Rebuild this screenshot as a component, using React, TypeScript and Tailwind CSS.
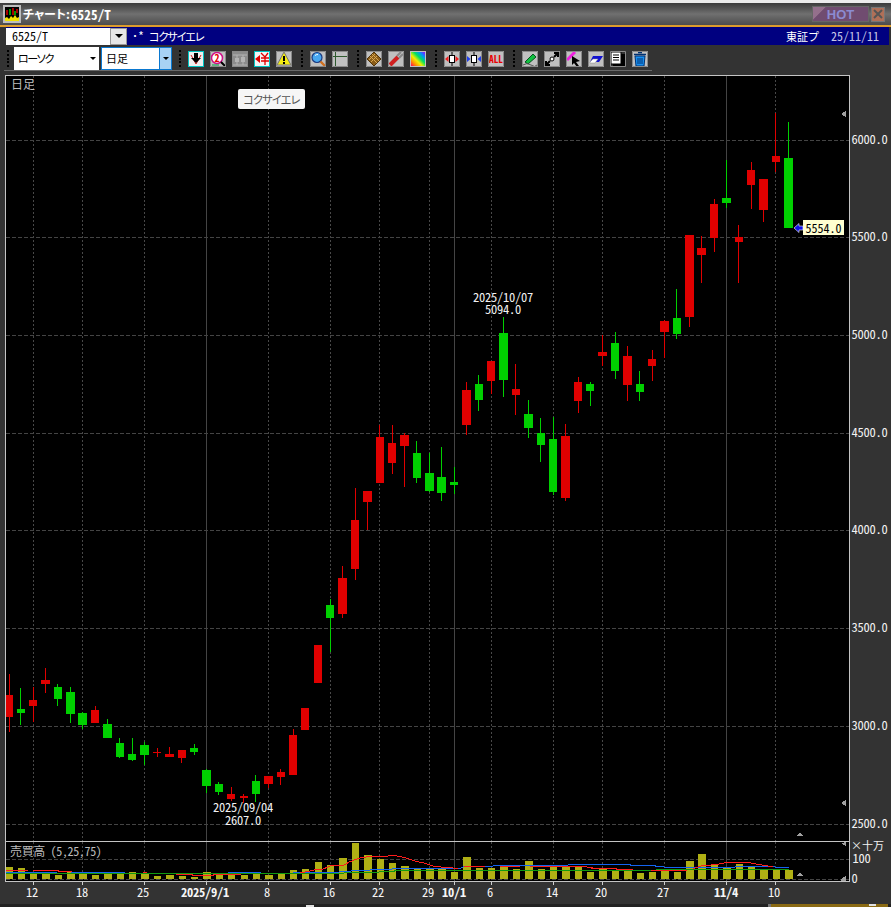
import React from "react";

// [cx, high, bodyTop, bodyBottom, low, color, bodyLeft, bodyWidth]
type C = [number, number, number, number, number, "r" | "g", number, number];
const candles: C[] = [
  [9, 674, 695, 717, 732, "r", 5, 8],
  [20, 688, 709, 713, 725, "g", 17, 8],
  [33, 687, 700, 706, 722, "r", 29, 8],
  [45, 668, 680, 684, 693, "r", 41, 9],
  [57, 684, 687, 699, 706, "g", 54, 8],
  [70, 687, 692, 714, 723, "g", 66, 9],
  [82, 712, 713, 725, 729, "g", 78, 9],
  [95, 706, 710, 723, 723, "r", 91, 8],
  [107, 719, 724, 738, 738, "g", 103, 9],
  [119, 738, 743, 757, 758, "g", 116, 8],
  [132, 738, 754, 760, 761, "g", 128, 8],
  [144, 742, 745, 755, 765, "g", 140, 9],
  [157, 748, 752, 753, 757, "r", 153, 8],
  [169, 747, 754, 757, 757, "r", 165, 9],
  [181, 750, 750, 758, 763, "r", 178, 8],
  [194, 744, 748, 752, 755, "g", 190, 8],
  [206, 769, 770, 786, 793, "g", 202, 9],
  [218, 782, 784, 792, 795, "g", 215, 8],
  [231, 787, 794, 799, 801, "r", 227, 8],
  [243, 794, 796, 798, 803, "r", 240, 8],
  [255, 775, 781, 794, 802, "g", 252, 8],
  [268, 776, 776, 784, 788, "r", 264, 9],
  [280, 769, 772, 777, 785, "r", 277, 8],
  [293, 729, 735, 775, 775, "r", 289, 8],
  [305, 708, 708, 730, 730, "r", 301, 8],
  [318, 645, 645, 683, 683, "r", 314, 8],
  [330, 599, 605, 618, 652, "g", 326, 8],
  [342, 566, 578, 614, 618, "r", 338, 9],
  [355, 488, 520, 569, 580, "r", 351, 8],
  [367, 491, 491, 502, 530, "r", 363, 9],
  [379, 425, 437, 483, 483, "r", 376, 8],
  [392, 425, 443, 463, 474, "r", 388, 8],
  [404, 433, 435, 446, 487, "r", 400, 9],
  [416, 441, 453, 478, 483, "g", 413, 8],
  [429, 453, 473, 491, 492, "g", 425, 9],
  [441, 447, 477, 493, 501, "g", 437, 9],
  [454, 467, 482, 485, 494, "g", 450, 8],
  [466, 382, 390, 425, 435, "r", 462, 9],
  [478, 375, 384, 400, 411, "g", 475, 8],
  [491, 361, 361, 381, 394, "r", 487, 8],
  [503, 317, 333, 380, 397, "g", 499, 9],
  [515, 364, 389, 395, 415, "r", 512, 8],
  [528, 400, 414, 428, 438, "g", 524, 9],
  [540, 418, 433, 445, 462, "g", 537, 8],
  [553, 417, 439, 492, 495, "g", 549, 8],
  [565, 424, 436, 498, 501, "r", 561, 9],
  [578, 377, 382, 401, 413, "r", 574, 8],
  [590, 382, 384, 391, 406, "g", 586, 8],
  [602, 335, 352, 356, 366, "r", 598, 9],
  [615, 332, 343, 371, 379, "g", 611, 8],
  [627, 346, 356, 385, 401, "r", 623, 9],
  [639, 371, 384, 392, 401, "g", 636, 8],
  [652, 350, 359, 366, 381, "r", 648, 8],
  [664, 320, 321, 332, 358, "r", 660, 9],
  [676, 289, 318, 334, 339, "g", 673, 8],
  [689, 235, 235, 317, 327, "r", 685, 9],
  [701, 236, 248, 255, 283, "r", 697, 9],
  [714, 199, 204, 238, 252, "r", 710, 8],
  [726, 160, 198, 203, 208, "g", 722, 9],
  [738, 225, 237, 242, 283, "r", 735, 8],
  [751, 162, 170, 185, 209, "r", 747, 8],
  [763, 179, 179, 210, 222, "r", 759, 9],
  [775, 113, 156, 162, 172, "r", 772, 8],
  [788, 122, 158, 228, 228, "g", 784, 9],
];

const volTops = [
  867, 868, 874, 874, 875, 872, 874, 875, 874, 874, 872, 873, 876, 875, 876, 877, 872, 874, 874, 875, 874, 875, 874, 870,
  869, 862, 865, 858, 843, 855, 859, 863, 866, 869, 869, 869, 872, 857, 868, 868, 867, 869, 861, 869, 867, 867, 867, 872,
  869, 871, 871, 873, 872, 871, 872, 861, 854, 865, 868, 864, 867, 870, 870, 870,
];

const hLines = [140, 237, 335, 433, 530, 628, 726, 824];
const dotted = [33, 82, 144, 268, 330, 379, 429, 491, 553, 602, 664, 775];
const solid = [206, 454, 726];

const z = (off: number, pts: [number, number][]) =>
  pts.map(([x, y]) => `${x / 3 + off},${780 + y / 3}`).join(" ");

const red = [
  z(0, [[17, 271], [84, 271]]),
  z(0, [[99, 271], [174, 271], [174, 274], [215, 274]]),
  z(0, [[429, 277], [440, 277]]),
  z(0, [[528, 283], [578, 283], [578, 286], [640, 286], [640, 283], [723, 283]]),
  z(300, [[0, 278], [21, 275], [42, 270], [70, 267], [90, 258], [130, 256], [150, 245], [175, 235], [210, 229], [260, 229], [275, 226], [300, 229], [320, 235], [345, 243], [375, 250], [400, 258], [430, 262], [475, 265]]),
  z(300, [[492, 259], [555, 259]]),
  z(300, [[600, 260], [660, 258]]),
  z(300, [[690, 259], [850, 259], [870, 263], [900, 266]]),
  z(591, [[0, 265], [75, 265], [75, 268], [125, 268]]),
  z(591, [[180, 270], [230, 272], [290, 270]]),
  z(591, [[305, 266], [330, 258], [380, 253], [390, 250], [420, 247], [470, 247], [500, 253], [545, 260]]),
];
const blue = [
  z(0, [[17, 278], [174, 276], [215, 274], [215, 278], [375, 278]]),
  z(0, [[684, 278], [783, 278]]),
  z(0, [[880, 278], [900, 278]]),
  z(300, [[0, 278], [90, 278], [130, 275], [165, 272], [210, 270], [300, 266], [475, 267], [490, 261], [580, 258], [690, 256], [800, 256], [810, 253], [900, 253]]),
  z(591, [[0, 253], [115, 253], [120, 256], [190, 256], [195, 259], [230, 262], [430, 262], [440, 258], [500, 258], [510, 260], [595, 262]]),
];
const green = [
  z(0, [[17, 281], [900, 280]]),
  z(300, [[0, 280], [90, 280], [220, 277], [300, 272], [535, 272], [540, 271], [900, 271]]),
  z(591, [[0, 271], [595, 268]]),
];

const dates: [number, string, boolean][] = [
  [32, "12", false], [82, "18", false], [143, "25", false], [205, "2025/9/1", true], [267, "8", false],
  [329, "16", false], [378, "22", false], [428, "29", false], [454, "10/1", true], [490, "6", false],
  [552, "14", false], [601, "20", false], [663, "27", false], [726, "11/4", true], [774, "10", false],
];

const prices: [number, string][] = [
  [140, "6000.0"], [237, "5500.0"], [335, "5000.0"], [433, "4500.0"], [530, "4000.0"], [628, "3500.0"], [726, "3000.0"], [824, "2500.0"],
];

const Grip = () => (
  <div className="flex h-[17px] w-[3px] shrink-0 flex-col justify-between">
    {[0, 1, 2, 3, 4].map((i) => (
      <span key={i} className="h-[2px] w-[2px] bg-black" />
    ))}
  </div>
);

const Icon = ({ children, cyan, bg }: { children: React.ReactNode; cyan?: boolean; bg?: string }) => (
  <svg width="16" height="16" viewBox="0 0 16 16" className="shrink-0">
    <rect x="0" y="0" width="16" height="16" fill={bg ?? "#c0c0c0"} />
    {children}
    {cyan ? (
      <rect x="0.5" y="0.5" width="15" height="15" fill="none" stroke="#00c4c4" />
    ) : (
      <path d="M0.5 15.5V.5H15.5M15.5 .5V15.5H.5" fill="none" stroke="#8a8a8a" strokeWidth="1" />
    )}
  </svg>
);

const CandleIcon = ({ colour, inward }: { colour: string; inward?: boolean }) => (
  <>
    <path d="M8 1V15" stroke="#000" />
    <rect x="5.5" y="4.5" width="5" height="7" fill="#fff" stroke="#000" />
    {inward ? (
      <path d="M1 5L4.5 8L1 11ZM15 5L11.5 8L15 11Z" fill={colour} />
    ) : (
      <path d="M4.5 5V11L1 8ZM11.5 5V11L15 8Z" fill={colour} />
    )}
  </>
);

const T = ({ x, y, children, fill = "#f2f2f2", anchor = "start", bold }: {
  x: number; y: number; children: React.ReactNode; fill?: string; anchor?: "start" | "middle" | "end"; bold?: boolean;
}) => (
  <text x={x} y={y - 1.2} fill={fill} textAnchor={anchor} fontSize={12.5} letterSpacing={-0.25} fontWeight={bold ? 700 : 400} dominantBaseline="central">
    {children}
  </text>
);

const Grid = ({ y1, y2, rows }: { y1: number; y2: number; rows: number[] }) => (
  <g shapeRendering="crispEdges">
    {dotted.map((x) => (
      <line key={x} x1={x + 0.5} x2={x + 0.5} y1={y1} y2={y2} stroke="#484848" strokeDasharray="2 2" />
    ))}
    {solid.map((x) => (
      <line key={x} x1={x + 0.5} x2={x + 0.5} y1={y1} y2={y2} stroke="#444" />
    ))}
    {rows.map((y) => (
      <line key={y} x1={6} x2={849} y1={y + 0.5} y2={y + 0.5} stroke="#444" strokeDasharray="4 2" />
    ))}
  </g>
);

export default function App() {
  return (
    <div className='relative flex h-[907px] w-[891px] flex-col overflow-hidden bg-[#333333] [font-family:"Noto_Sans_CJK_JP",sans-serif] [font-feature-settings:"hwid"] text-[12px] leading-none text-white'>
      <div className="h-[3px] shrink-0 bg-[#ececec]" />

      {/* title bar */}
      <div className="flex h-[22px] shrink-0 items-center bg-gradient-to-b from-[#3c3c3c] via-[#707070] to-[#4c4c4c] pl-[3px] pr-[6px]">
        <svg width="18" height="18" viewBox="0 0 18 18" className="shrink-0">
          <rect width="18" height="18" fill="#bdbdbd" />
          <rect x="2" y="2" width="14" height="14" fill="#000" />
          <path d="M2 16V13L4 12L6 14L8 11L10 13L12 10L14 13L16 12V16Z" fill="#f2e200" />
          <path d="M4 5V10M10 3V10M14 4V8" stroke="#e00000" strokeWidth="1.5" />
          <path d="M7 4V10M12 6V10" stroke="#00c800" strokeWidth="1.5" />
        </svg>
        <span className="ml-[2px] text-[12px] font-bold [font-feature-settings:'palt']">チャート:</span>
        <span className="ml-[1px] text-[13px] font-bold tracking-[0.2px]">6525/T</span>
        <div className="ml-auto flex h-[16px] w-[57px] items-center justify-center border border-[#666] bg-[linear-gradient(135deg,#94708c_0%,#94708c_18%,#704c70_19%)] text-[13px] font-bold [font-family:'Liberation_Sans',sans-serif] text-[#8b8bd0]">
          HOT
        </div>
        <div className="ml-[2px] flex h-[15px] w-[14px] items-center justify-center border border-[#777] bg-[#b07058]">
          <svg width="10" height="10" viewBox="0 0 10 10">
            <path d="M1 1L9 9M9 1L1 9" stroke="#555" strokeWidth="2" />
          </svg>
        </div>
      </div>
      <div className="h-[2px] shrink-0 bg-[#dc9c2c]" />

      {/* symbol bar */}
      <div className="ml-[6px] mr-[2px] flex h-[18px] shrink-0 items-center bg-[#000080]">
        <div className="flex h-[17px] w-[104px] items-center bg-white pl-[6px] text-[12px] text-black">6525/T</div>
        <div className="flex h-[17px] w-[17px] items-center justify-center border border-[#999] bg-[#e6e6e6]">
          <span className="h-0 w-0 border-x-[4px] border-t-[4px] border-x-transparent border-t-black" />
        </div>
        <span className="ml-[5px] text-[12px]">･*</span>
        <span className="ml-[5px] text-[11px] tracking-[-1px] [font-feature-settings:'palt']">コクサイエレ</span>
        <span className="ml-auto text-[11px] [font-feature-settings:'normal']">東証プ</span>
        <span className="ml-[12px] mr-[10px] text-[#c8c8e8]">25/11/11</span>
      </div>

      {/* toolbar */}
      <div className="ml-[4px] flex h-[26px] w-[648px] shrink-0 items-center border-b border-[#6a6a6a] pl-[3px] pt-[2px]">
        <Grip />
        <div className="ml-[4px] flex h-[23px] w-[85px] items-center justify-between bg-white pl-[4px] pr-[3px] text-[11px] text-black">
          <span className="tracking-[-1.4px] [font-feature-settings:'palt']">ローソク</span>
          <span className="h-0 w-0 border-x-[3px] border-t-[3px] border-x-transparent border-t-black" />
        </div>
        <div className="ml-[2px] flex h-[23px] w-[71px] items-stretch border border-[#0a78d0] bg-white text-[11px] text-black">
          <span className="flex flex-1 items-center pl-[4px] [font-feature-settings:'normal']">日足</span>
          <span className="flex w-[12px] items-center justify-center border-l border-[#0a78d0] bg-[#a8d2f4]">
            <span className="h-0 w-0 border-x-[3px] border-t-[3px] border-x-transparent border-t-black" />
          </span>
        </div>
        <div className="ml-[7px]"><Grip /></div>
        <div className="ml-[6px] flex gap-[6px]">
          <Icon cyan bg="#f0f0f0">
            <path d="M3 4L8 13L13 4" fill="none" stroke="#d01818" strokeWidth="1" />
            <path d="M6 2H10V7H13L8 12L3 7H6Z" fill="#000" />
          </Icon>
          <Icon>
            <circle cx="7" cy="7" r="5.5" fill="#fff" stroke="#d0108a" strokeWidth="1.5" />
            <text x="7" y="10.5" fontSize="10" fill="#e00000" textAnchor="middle" fontWeight={700}>2</text>
            <path d="M11 11L15 15" stroke="#000" strokeWidth="2" />
            <path d="M2 14H9" stroke="#00a040" />
          </Icon>
          <Icon bg="#8c8c8c">
            <path d="M1 4H15M1 14H15M5 4V14M11 4V14" stroke="#b4b4b4" />
            <rect x="3" y="7" width="4" height="4" fill="#b4b4b4" />
            <rect x="9" y="6" width="4" height="5" fill="#b4b4b4" />
          </Icon>
          <Icon cyan bg="#f4f4f4">
            <path d="M1 8L6 4V12Z" fill="#e00000" />
            <path d="M7 2L11 6L14 2M7 7H15M7 10H15M11 6V14" stroke="#e00000" fill="none" strokeWidth="1.3" />
          </Icon>
          <Icon>
            <path d="M8 1L15 14H1Z" fill="#f4ec10" stroke="#777" />
            <path d="M8 5V10M8 11V13" stroke="#000" strokeWidth="2" />
          </Icon>
        </div>
        <div className="ml-[9px]"><Grip /></div>
        <div className="ml-[6px] flex gap-[6px]">
          <Icon>
            <circle cx="7" cy="6.5" r="5" fill="#48a8f0" stroke="#1a3a80" strokeWidth="1.2" />
            <path d="M5 4.5Q6 3.5 8 3.5" stroke="#fff" fill="none" />
            <path d="M10.5 10.5L15 15" stroke="#d07020" strokeWidth="2.4" />
          </Icon>
          <Icon>
            <path d="M0 5.5H16M3.5 0V16" stroke="#2e5a2e" strokeWidth="1" />
          </Icon>
        </div>
        <div className="ml-[9px]"><Grip /></div>
        <div className="ml-[6px] flex gap-[6px]">
          <Icon>
            <path d="M8 1L15 8L8 15L1 8Z" fill="#8a5c18" stroke="#50340a" />
            <path d="M4 5L11 12M6 3L13 10M5 11L11 5M3 9L9 3" stroke="#d8a850" />
          </Icon>
          <Icon>
            <path d="M2 14L10 6" stroke="#d02020" strokeWidth="4" />
            <path d="M9 5L13 1M11 7L15 3" stroke="#888" strokeWidth="2" />
          </Icon>
          <svg width="16" height="16" viewBox="0 0 16 16" className="shrink-0">
            <defs>
              <linearGradient id="rb" x1="0" y1="1" x2="1" y2="0">
                <stop offset="0" stopColor="#ff0060" />
                <stop offset=".2" stopColor="#ff9000" />
                <stop offset=".4" stopColor="#f0f000" />
                <stop offset=".6" stopColor="#00e060" />
                <stop offset=".8" stopColor="#0090ff" />
                <stop offset="1" stopColor="#a000ff" />
              </linearGradient>
            </defs>
            <rect width="16" height="16" fill="#c0c0c0" />
            <rect x="1" y="1" width="14" height="14" fill="url(#rb)" />
          </svg>
        </div>
        <div className="ml-[9px]"><Grip /></div>
        <div className="ml-[6px] flex gap-[6px]">
          <Icon><CandleIcon colour="#f02020" /></Icon>
          <Icon><CandleIcon colour="#2040f0" inward /></Icon>
          <Icon>
            <text x="8" y="12" fontSize="10" fill="#e80000" textAnchor="middle" fontWeight={700} textLength="14" lengthAdjust="spacingAndGlyphs">ALL</text>
          </Icon>
        </div>
        <div className="ml-[9px]"><Grip /></div>
        <div className="ml-[6px] flex gap-[6px]">
          <Icon>
            <path d="M3 11L11 3L14 6L6 13Z" fill="#10c040" stroke="#085020" />
            <path d="M1 14Q5 11 9 14T15 14" stroke="#555" fill="none" />
          </Icon>
          <Icon>
            <path d="M2 14L6 10M10 6L14 2M10 2H14V6M2 10V14H6" stroke="#000" strokeWidth="2" fill="none" />
            <circle cx="8" cy="8" r="2" fill="#fff" stroke="#000" />
          </Icon>
          <Icon>
            <path d="M1 9L9 1" stroke="#f020e0" strokeWidth="3" />
            <path d="M6 5L14 10L10 11L13 15L11 16L8 12L6 14Z" fill="#000" />
          </Icon>
          <Icon>
            <path d="M5 5H15L11 11H2Z" fill="#1010d0" />
            <path d="M2 11L5 8H10L7 12H2Z" fill="#fff" stroke="#888" strokeWidth=".5" />
          </Icon>
          <Icon bg="#333">
            <rect x="3" y="3" width="12" height="13" fill="#000" />
            <rect x="1" y="1" width="10" height="12" fill="#fff" stroke="#000" />
            <path d="M3 4H9M3 6.5H9M3 9H9" stroke="#000" />
          </Icon>
          <Icon>
            <path d="M3 5H13L12 15H4Z" fill="#1890f0" stroke="#003070" />
            <path d="M2 3.5H14M6 1.5H10" stroke="#003070" strokeWidth="1.5" />
            <path d="M6 7V13M8 7V13M10 7V13" stroke="#003070" />
          </Icon>
        </div>
      </div>

      {/* chart panes + price axis */}
      <div className="flex shrink-0 pl-[5px] pt-[4px]">
        <div className="relative flex w-[845px] flex-col border border-[#c4c4c4] bg-black">
          <svg width="843" height="765" viewBox="6 76 843 765" className="block" shapeRendering="crispEdges">
            <Grid y1={76} y2={841} rows={hLines} />
            {candles.map(([cx, hi, top, bot, lo, c, l, w]) => {
              const col = c === "r" ? "#e00000" : "#00d000";
              return (
                <g key={cx}>
                  <rect x={cx} y={hi} width={1} height={lo - hi} fill={col} />
                  <rect x={l} y={top} width={w} height={Math.max(bot - top, 1)} fill={col} />
                </g>
              );
            })}
            <path d="M794 228L799 223.5V226H803V230H799V232.5Z" fill="#1010e8" stroke="#fff" strokeWidth=".6" shapeRendering="auto" />
            <path d="M841 114L846 111V117ZM841 803L846 800V806Z" fill="#a0a0a0" />
            <path d="M800 832L797 836H803Z" fill="#a0a0a0" />
            <g shapeRendering="auto">
              <T x={243} y={808} anchor="middle">2025/09/04</T>
              <T x={243} y={820.5} anchor="middle">2607.0</T>
              <T x={503} y={297.5} anchor="middle">2025/10/07</T>
              <T x={503} y={310} anchor="middle">5094.0</T>
            </g>
          </svg>
          <div className="h-[1px] bg-[#c4c4c4]" />
          <svg width="843" height="39" viewBox="6 842 843 39" className="block" shapeRendering="crispEdges">
            <Grid y1={842} y2={881} rows={[859, 879]} />
            {candles.map(([cx, , , , , , l, w], i) => (
              <rect key={cx} x={l + 1} y={volTops[i]} width={w - 1} height={879 - volTops[i]} fill="#b0b014" />
            ))}
            {green.map((p, i) => <polyline key={i} points={p} fill="none" stroke="#109a10" />)}
            {blue.map((p, i) => <polyline key={i} points={p} fill="none" stroke="#1464f0" />)}
            {red.map((p, i) => <polyline key={i} points={p} fill="none" stroke="#ff1c1c" />)}
            <path d="M800 872L797 876H803Z" fill="#a0a0a0" />
            <path d="M841 879L846 876V881H841ZM841 843L846 842V846Z" fill="#a0a0a0" />
          </svg>

          {/* overlays */}
          <span className="absolute left-[5px] top-[2px] text-[12px] text-[#bdbdbd] [font-feature-settings:'normal']">日足</span>
          <div className="absolute left-[232px] top-[13px] flex h-[20px] w-[67px] items-center justify-center rounded-[2px] bg-[#f6f6f6] text-[11px] tracking-[-0.7px] text-[#555] [font-feature-settings:'palt']">
            コクサイエレ
          </div>
          <div className="absolute left-[797px] top-[144px] flex h-[15px] w-[41px] items-center justify-center bg-[#ffffd0] text-[12px] text-black">
            5554.0
          </div>
          <span className="absolute left-[4px] top-[769px] text-[12px] tracking-[-0.35px] text-[#bdbdbd]">
            <span className="[font-feature-settings:'normal']">売買高</span> (5,25,75)
          </span>
        </div>
        <svg width="41" height="807" viewBox="850 75 41 807" className="block shrink-0 overflow-visible">
          {prices.map(([y, s]) => (
            <T key={s} x={851.5} y={y}>{s}</T>
          ))}
          <text x={851} y={845} fill="#f2f2f2" fontSize={11} dominantBaseline="central" style={{ fontFeatureSettings: "normal" }}>×十万</text>
          <T x={852.5} y={859}>100</T>
          <T x={851.5} y={878.5}>0</T>
        </svg>
      </div>

      {/* date axis */}
      <svg width="850" height="22" viewBox="0 882 850 22" className="block shrink-0">
        <g shapeRendering="crispEdges">
          {[...dotted, ...solid].map((x) => (
            <line key={x} x1={x + 0.5} x2={x + 0.5} y1={882} y2={885} stroke="#d0d0d0" />
          ))}
        </g>
        {dates.map(([x, s, b]) => (
          <T key={s} x={x} y={892.5} anchor="middle" bold={b} fill="#f6f6f6">{s}</T>
        ))}
      </svg>

      {/* bottom strip */}
      <div className="flex h-[4px] shrink-0 bg-[#222222]">
        <div className="ml-[306px] mt-[1px] h-[2px] w-[8px] bg-[#e0e0e0]" />
        <div className="ml-[454px] h-full w-[3px] bg-[#777]" />
        <div className="flex h-full w-[117px] justify-end bg-[#8a6a14]">
          <div className="mr-[12px] h-[2px] w-[7px] bg-[#e0e0e0]" />
        </div>
      </div>
    </div>
  );
}
